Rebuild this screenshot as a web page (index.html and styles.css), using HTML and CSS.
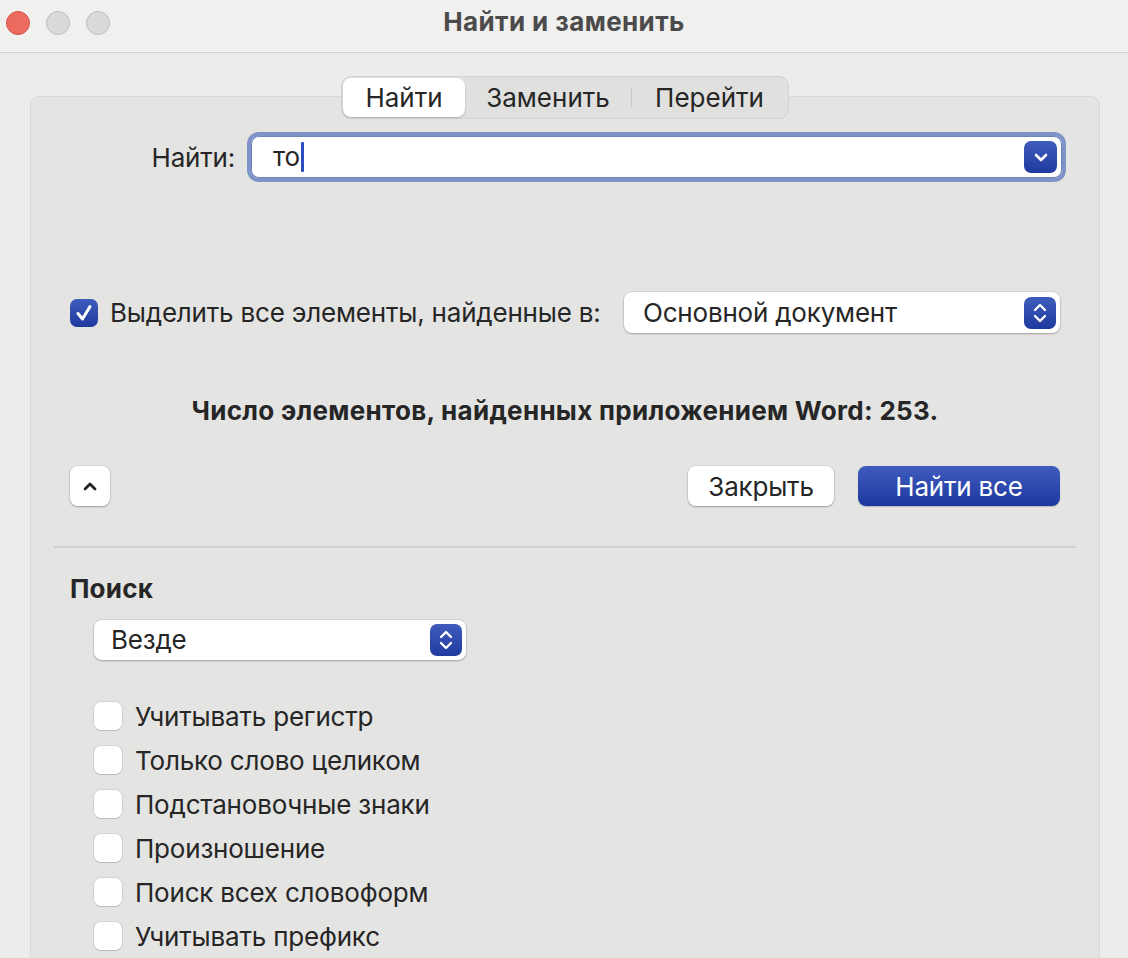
FILE: index.html
```html
<!DOCTYPE html>
<html lang="ru">
<head>
<meta charset="utf-8">
<title>Найти и заменить</title>
<link rel="stylesheet" href="styles.css">
</head>
<body>
<div class="window">
  <div class="titlebar">
    <div class="lights">
      <span class="light red"></span>
      <span class="light grey"></span>
      <span class="light grey"></span>
    </div>
    <div class="title">Найти и заменить</div>
  </div>
  <div class="content">
    <div class="panel">
      <div class="tabs">
        <div class="tab active">Найти</div>
        <div class="tab">Заменить</div>
        <div class="tab-sep"></div>
        <div class="tab">Перейти</div>
      </div>

      <div class="find-row">
        <label class="find-label">Найти:</label>
        <div class="focus-ring">
          <div class="field">
            <span class="field-text">то</span><span class="caret"></span>
            <span class="drop-btn">
              <svg width="14" height="9" viewBox="0 0 14 9"><path d="M2 2 L7 7 L12 2" fill="none" stroke="#fff" stroke-width="2.6" stroke-linecap="round" stroke-linejoin="round"/></svg>
            </span>
          </div>
        </div>
      </div>

      <div class="check-row">
        <span class="checkbox checked">
          <svg width="22" height="22" viewBox="0 0 22 22"><path d="M5 11.5 L9.5 17 L17 4.5" fill="none" stroke="#fff" stroke-width="3" stroke-linecap="round" stroke-linejoin="round"/></svg>
        </span>
        <span class="check-label">Выделить все элементы, найденные в:</span>
        <div class="popup popup-doc">
          <span class="popup-text">Основной документ</span>
          <span class="stepper">
            <svg width="16" height="22" viewBox="0 0 16 22"><path d="M3 8 L8 3 L13 8 M3 14 L8 19 L13 14" fill="none" stroke="#fff" stroke-width="2.4" stroke-linecap="round" stroke-linejoin="round"/></svg>
          </span>
        </div>
      </div>

      <div class="count">Число элементов, найденных приложением Word: 253.</div>

      <div class="button-row">
        <button class="btn btn-icon">
          <svg width="16" height="10" viewBox="0 0 16 10"><path d="M3 8 L8 3 L13 8" fill="none" stroke="#222" stroke-width="2.8" stroke-linecap="round" stroke-linejoin="round"/></svg>
        </button>
        <div class="spacer"></div>
        <button class="btn btn-close">Закрыть</button>
        <button class="btn btn-primary">Найти все</button>
      </div>

      <div class="separator"></div>

      <div class="section-title">Поиск</div>
      <div class="popup popup-where">
        <span class="popup-text">Везде</span>
        <span class="stepper">
          <svg width="16" height="22" viewBox="0 0 16 22"><path d="M3 8 L8 3 L13 8 M3 14 L8 19 L13 14" fill="none" stroke="#fff" stroke-width="2.4" stroke-linecap="round" stroke-linejoin="round"/></svg>
        </span>
      </div>

      <div class="options">
        <div class="option"><span class="checkbox"></span><span>Учитывать регистр</span></div>
        <div class="option"><span class="checkbox"></span><span>Только слово целиком</span></div>
        <div class="option"><span class="checkbox"></span><span>Подстановочные знаки</span></div>
        <div class="option"><span class="checkbox"></span><span>Произношение</span></div>
        <div class="option"><span class="checkbox"></span><span>Поиск всех словоформ</span></div>
        <div class="option"><span class="checkbox"></span><span>Учитывать префикс</span></div>
      </div>
    </div>
  </div>
</div>
</body>
</html>
```

FILE: styles.css
```css
* { box-sizing: border-box; }
html, body {
  margin: 0;
  padding: 0;
  background: #ececeb;
}
body {
  font-family: Inter, "Noto Sans", "Liberation Sans", sans-serif;
  font-size: 26px;
  letter-spacing: -0.2px;
  color: #262626;
  width: 1128px;
  height: 958px;
  overflow: hidden;
}
.window {
  width: 1128px;
  height: 958px;
  overflow: hidden;
}
.titlebar {
  height: 53px;
  background: #f0f0ef;
  border-bottom: 1px solid #d2d2d1;
  display: flex;
  align-items: center;
  position: relative;
}
.lights {
  display: flex;
  gap: 16px;
  padding-left: 6px;
  margin-top: -6px;
}
.light {
  width: 24px;
  height: 24px;
  border-radius: 50%;
  display: block;
}
.light.red {
  background: #ed6a5f;
  border: 1px solid #d65448;
}
.light.grey {
  background: #dadad9;
  border: 1px solid #bdbdbc;
}
.title {
  position: absolute;
  left: 0;
  right: 0;
  top: 6px;
  text-align: center;
  font-weight: 700;
  font-size: 26px;
  letter-spacing: 0.4px;
  color: #4b4b4b;
  line-height: 32px;
}
.content {
  padding: 0 28px 0 30px;
}
.panel {
  margin-top: 43px;
  height: 1000px;
  background: #e4e4e3;
  border: 1px solid #d8d8d7;
  border-radius: 9px;
}
.tabs {
  margin: -21px auto 0;
  width: 448px;
  height: 43px;
  display: flex;
  align-items: center;
  background: #e0e0df;
  border: 1px solid #d3d3d2;
  border-radius: 10px;
  padding: 1px;
}
.tab {
  height: 39px;
  display: flex;
  align-items: center;
  justify-content: center;
  padding: 0 22px;
  color: #262626;
  line-height: 1;
  letter-spacing: 0;
}
.tab.active {
  width: 122px;
  background: #fff;
  border-radius: 8px;
  box-shadow: 0 1px 2px rgba(0,0,0,0.22);
}
.tab:nth-child(2) { width: 166px; }
.tab:nth-child(4) { flex: 1; }
.tab-sep {
  width: 1px;
  height: 20px;
  background: #c9c9c8;
}
.find-row {
  margin-top: 13px;
  height: 50px;
  display: flex;
  align-items: center;
  padding-right: 33px;
}
.find-label {
  width: 204px;
  text-align: right;
  margin-right: 12px;
}
.focus-ring {
  flex: 1;
  height: 50px;
  padding: 4px;
  background: #7e94c9;
  border-radius: 12px;
}
.field {
  height: 42px;
  background: #fff;
  border-radius: 8px;
  display: flex;
  align-items: center;
  padding-left: 22px;
  padding-right: 5px;
  box-shadow: inset 0 0 0 1px #6d84bd;
}
.field-text {
  line-height: 1;
}
.caret {
  width: 3px;
  height: 30px;
  background: #2b4cbf;
  border-radius: 1px;
  margin-left: 1px;
}
.drop-btn {
  margin-left: auto;
  width: 33px;
  height: 32px;
  border-radius: 7px;
  background: linear-gradient(#3f5cbc, #1f3a9f);
  display: flex;
  align-items: center;
  justify-content: center;
}
.check-row {
  margin-top: 110px;
  height: 41px;
  display: flex;
  align-items: center;
  padding-left: 39px;
  padding-right: 39px;
}
.checkbox {
  width: 28px;
  height: 28px;
  border-radius: 7px;
  background: #fff;
  box-shadow: 0 0 0 1px rgba(0,0,0,0.08), 0 1px 1px rgba(0,0,0,0.1);
  display: flex;
  align-items: center;
  justify-content: center;
  flex: none;
}
.checkbox.checked {
  background: linear-gradient(#3f5cbc, #1f3a9f);
  box-shadow: none;
}
.check-label {
  margin-left: 12px;
}
.popup {
  height: 41px;
  background: #fff;
  border-radius: 8px;
  box-shadow: 0 0 0 1px rgba(0,0,0,0.06), 0 1px 2px rgba(0,0,0,0.25);
  display: flex;
  align-items: center;
  padding-left: 19px;
  padding-right: 4px;
}
.popup-doc {
  margin-left: auto;
  width: 436px;
}
.popup-text {
  line-height: 1;
}
.stepper {
  margin-left: auto;
  width: 32px;
  height: 32px;
  border-radius: 7px;
  background: linear-gradient(#3f5cbc, #1f3a9f);
  display: flex;
  align-items: center;
  justify-content: center;
}
.count {
  margin-top: 63px;
  height: 30px;
  line-height: 30px;
  text-align: center;
  font-weight: 700;
  letter-spacing: 0.3px;
}
.button-row {
  margin-top: 40px;
  height: 40px;
  display: flex;
  align-items: center;
  padding-left: 39px;
  padding-right: 39px;
  gap: 24px;
}
.spacer { flex: 1; }
.btn {
  font-family: inherit;
  font-size: 26px;
  letter-spacing: -0.2px;
  height: 40px;
  border: none;
  border-radius: 8px;
  background: #fff;
  color: #262626;
  box-shadow: 0 0 0 1px rgba(0,0,0,0.05), 0 1px 2px rgba(0,0,0,0.28);
  padding: 0;
  display: flex;
  align-items: center;
  justify-content: center;
}
.btn-icon {
  width: 40px;
}
.btn-close {
  width: 146px;
}
.btn-primary {
  width: 202px;
  color: #fff;
  background: linear-gradient(#3f5cbd, #1d38a0);
  box-shadow: 0 1px 1px rgba(0,0,0,0.2);
}
.separator {
  margin: 40px 23px 0;
  height: 2px;
  background: #d0d0cf;
}
.section-title {
  margin-top: 26px;
  padding-left: 39px;
  height: 30px;
  line-height: 30px;
  font-weight: 700;
  letter-spacing: 0.2px;
}
.popup-where {
  margin-top: 16px;
  margin-left: 63px;
  width: 372px;
  height: 40px;
  padding-left: 17px;
}
.options {
  margin-top: 42px;
  padding-left: 63px;
  display: flex;
  flex-direction: column;
  gap: 16px;
}
.option {
  height: 28px;
  display: flex;
  align-items: center;
  gap: 13px;
}
```
